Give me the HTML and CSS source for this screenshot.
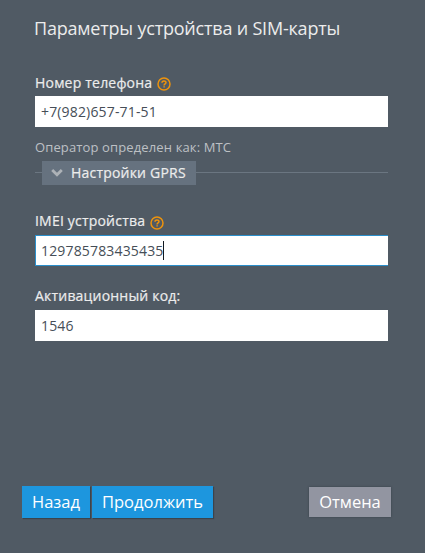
FILE: index.html
```html
<!DOCTYPE html>
<html lang="ru">
<head>
  <meta charset="UTF-8">
  <meta name="viewport" content="width=device-width, initial-scale=1.0">
  <title>Параметры устройства и SIM-карты</title>
  <link rel="stylesheet" href="styles.css">
</head>
<body>
  <form class="dialog">
    <h1>Параметры устройства и SIM-карты</h1>

    <div class="field phone">
      <label><span>Номер телефона</span>
        <svg class="help" viewBox="0 0 14 14"><circle cx="7" cy="7" r="6"/><path d="M5 5.7C5 3.3 9 3.3 9 5.6C9 7 7.1 6.9 7.1 8.5M7.1 9.3V10.6"/></svg>
      </label>
      <div class="input" contenteditable="true">+7(982)657-71-51</div>
      <div class="hint">Оператор определен как: МТС</div>
    </div>

    <div class="divider">
      <button type="button" class="toggle">
        <svg class="chevron" viewBox="0 0 12 8"><path d="M1.2 1L6 5.8L10.8 1"/></svg>
        <span>Настройки GPRS</span>
      </button>
    </div>

    <div class="field imei">
      <label><span>IMEI устройства</span>
        <svg class="help" viewBox="0 0 14 14"><circle cx="7" cy="7" r="6"/><path d="M5 5.7C5 3.3 9 3.3 9 5.6C9 7 7.1 6.9 7.1 8.5M7.1 9.3V10.6"/></svg>
      </label>
      <div class="input active" contenteditable="true"><span>129785783435435</span><i class="caret"></i></div>
    </div>

    <div class="field code">
      <label><span>Активационный код:</span></label>
      <div class="input" contenteditable="true">1546</div>
    </div>

    <div class="buttons">
      <button type="button" class="btn back">Назад</button>
      <button type="submit" class="btn next">Продолжить</button>
      <button type="button" class="btn cancel">Отмена</button>
    </div>
  </form>
</body>
</html>
```

FILE: styles.css
```css
* {
  box-sizing: border-box;
}
body {
  margin: 0;
  background: #505a64;
  color: #ececec;
  font-family: "Open Sans", "Noto Sans", sans-serif;
  font-size: 14px;
}
.dialog {
  display: flex;
  flex-direction: column;
  height: 553px;
  padding: 16px 37px 35px 35px;
}
h1 {
  margin: 0 0 0 -1px;
  font-size: 18px;
  font-weight: 400;
  letter-spacing: -0.2px;
  line-height: 24px;
  white-space: nowrap;
}
label {
  display: flex;
  align-items: center;
  gap: 5px;
  height: 20px;
  margin-bottom: 3px;
  letter-spacing: 0.2px;
  line-height: 20px;
  -webkit-text-stroke: 0.2px #ececec;
}
.phone {
  margin-top: 33px;
}
.imei {
  margin-top: 26px;
}
.code {
  margin-top: 20px;
}
.imei label,
.code label {
  margin-bottom: 4px;
}
.help {
  width: 14px;
  height: 14px;
  margin-top: 1px;
  fill: none;
  stroke: #ee930c;
  stroke-width: 1.5;
}
.imei .help {
  margin-top: 3px;
}
.input {
  display: flex;
  align-items: center;
  height: 31px;
  padding: 0 6px;
  border: 1px solid #fff;
  border-left-width: 0;
  background: #fff;
  color: #464e57;
  letter-spacing: 0.16px;
  line-height: 20px;
  outline: none;
}
.input.active {
  padding-left: 5px;
  border: 1px solid #2b8fcb;
  border-right: 0;
}
.caret {
  width: 1px;
  height: 19px;
  background: #111820;
}
.hint {
  height: 20px;
  margin-top: 10px;
  color: #bdc0c4;
  font-size: 13px;
  letter-spacing: 0.13px;
  line-height: 20px;
}
.divider {
  display: flex;
  align-items: center;
  height: 24px;
  margin-top: 4px;
}
.divider::before,
.divider::after {
  content: "";
  width: 7px;
  height: 1px;
  margin-top: -1px;
  background: #6b7681;
}
.divider::after {
  flex: 1;
}
.toggle {
  display: flex;
  align-items: center;
  width: 154px;
  height: 24px;
  padding: 0 0 0 9px;
  border: 0;
  background: #66727f;
  color: #ececec;
  font: 14px/24px "Open Sans", "Noto Sans", sans-serif;
  letter-spacing: 0.2px;
  white-space: nowrap;
  -webkit-text-stroke: 0.2px #ececec;
}
.chevron {
  width: 12px;
  height: 8px;
  margin-right: 8px;
  fill: none;
  stroke: #adb2b7;
  stroke-width: 2.8;
}
.buttons {
  display: flex;
  align-items: center;
  gap: 2px;
  margin: auto -3px 0 -13px;
}
.btn {
  height: 32px;
  padding: 0;
  border: 0;
  background: #1d96de;
  box-shadow: 1px 1px 1px #3b444c;
  color: #fff;
  font: 16.5px/32px "Open Sans", "Noto Sans", sans-serif;
}
.back {
  width: 68px;
}
.next {
  width: 121px;
}
.cancel {
  width: 82px;
  height: 30px;
  margin-left: auto;
  background: #9295a1;
  box-shadow: 0 0 2px #363f48;
  line-height: 30px;
}
```
